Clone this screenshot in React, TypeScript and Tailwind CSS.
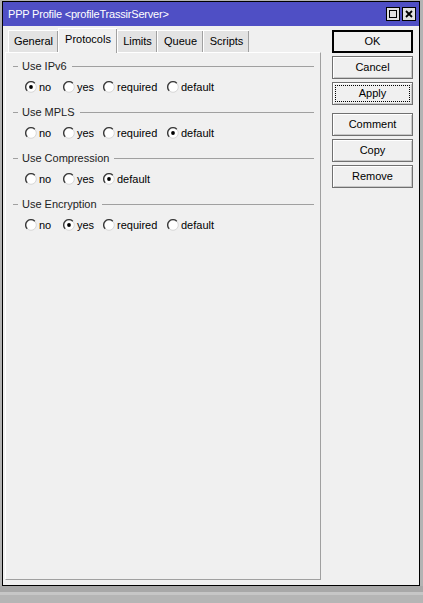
import React from "react";

type Opt = { label: string; w?: string };

const groups: { title: string; options: Opt[]; checked: number }[] = [
  {
    title: "Use IPv6",
    options: [
      { label: "no", w: "w-[38px]" },
      { label: "yes", w: "w-[40px]" },
      { label: "required", w: "w-[64px]" },
      { label: "default" },
    ],
    checked: 0,
  },
  {
    title: "Use MPLS",
    options: [
      { label: "no", w: "w-[38px]" },
      { label: "yes", w: "w-[40px]" },
      { label: "required", w: "w-[64px]" },
      { label: "default" },
    ],
    checked: 3,
  },
  {
    title: "Use Compression",
    options: [
      { label: "no", w: "w-[38px]" },
      { label: "yes", w: "w-[40px]" },
      { label: "default" },
    ],
    checked: 2,
  },
  {
    title: "Use Encryption",
    options: [
      { label: "no", w: "w-[38px]" },
      { label: "yes", w: "w-[40px]" },
      { label: "required", w: "w-[64px]" },
      { label: "default" },
    ],
    checked: 1,
  },
];

const tabs = ["General", "Protocols", "Limits", "Queue", "Scripts"];
const tabWidths = ["w-[50px]", "w-[59px]", "w-[40px]", "w-[46px]", "w-[46px]"];

const Radio = ({ on }: { on: boolean }) => (
  <svg width="12" height="12" viewBox="0 0 12 12" className="shrink-0">
    <circle cx="6" cy="6" r="5.3" fill="#ffffff" stroke="#d6d6d6" strokeWidth="1" />
    <path d="M2.2 9.8 A5.3 5.3 0 0 1 9.8 2.2" stroke="#3c3c3c" strokeWidth="1.4" fill="none" />
    {on && <circle cx="6" cy="6" r="1.9" fill="#000" />}
  </svg>
);

const Btn = ({ label, kind }: { label: string; kind?: "default" | "focus" }) => (
  <div
    className={
      "h-[23px] w-[81px] flex items-center justify-center bg-[#f0f0f0] text-[11px] text-black " +
      (kind === "default"
        ? "border-2 border-black"
        : "border border-[#707070] shadow-[inset_1px_1px_0_#ffffff,inset_-1px_-1px_0_#c8c8c8]")
    }
  >
    {kind === "focus" ? (
      <div className="h-[17px] w-[75px] border border-dotted border-black flex items-center justify-center">
        {label}
      </div>
    ) : (
      label
    )}
  </div>
);

export default function App() {
  return (
    <div
      className="w-[423px] h-[603px] bg-[#b3b3b3] overflow-hidden flex flex-col"
      style={{ fontFamily: '"Liberation Sans", Arial, sans-serif' }}
    >
      <div className="ml-[2px] mt-[1px] w-[418px] h-[585px] border border-black bg-[#f0f0f0] flex flex-col">
        {/* title bar */}
        <div className="h-[24px] bg-[#4f4fc5] flex items-center pl-[5px] pr-[3px] text-white text-[11px] tracking-[-0.2px]">
          <span className="flex-1">PPP Profile &lt;profileTrassirServer&gt;</span>
          <div className="flex gap-[2px]">
            <div className="w-[14px] h-[14px] bg-[#e0e0e0] border border-black flex items-center justify-center">
              <div className="w-[8px] h-[8px] border-[1.5px] border-black" />
            </div>
            <div className="w-[14px] h-[14px] bg-[#e0e0e0] border border-black flex items-center justify-center">
              <svg width="8" height="8" viewBox="0 0 8 8">
                <path d="M1 1 L7 7 M7 1 L1 7" stroke="#000" strokeWidth="1.8" />
              </svg>
            </div>
          </div>
        </div>

        {/* body */}
        <div className="flex flex-1 pl-[2px]">
          <div className="flex flex-col w-[316px]">
            <div className="flex items-end h-[26px] pl-[3px]">
              {tabs.map((t, i) => (
                <div
                  key={t}
                  className={
                    tabWidths[i] +
                    " flex items-center justify-center text-[11px] text-black border-t border-l border-white shadow-[inset_-1px_0_0_#a0a0a0] " +
                    (i === 1 ? "h-[25px] bg-[#f0f0f0] pb-[3px] relative z-10 -mb-[1px]" : "h-[22px] bg-[#e3e3e3]")
                  }
                >
                  {t}
                </div>
              ))}
            </div>
            <div className="flex-1 border-t border-l border-white border-r border-b border-r-[#a0a0a0] border-b-[#a0a0a0] mb-[5px] pt-[3px]">
              {groups.map((g) => (
                <div key={g.title} className="h-[46px]">
                  <div className="h-[20px] flex items-center pl-[7px] pr-[6px] text-[11px] text-[#222]">
                    <div className="w-[5px] h-[1px] bg-[#a0a0a0]" />
                    <span className="ml-[4px] mr-[5px]">{g.title}</span>
                    <div className="flex-1 h-[1px] bg-[#a0a0a0]" />
                  </div>
                  <div className="h-[22px] flex items-center pl-[19px] text-[11px] text-black">
                    {g.options.map((o, i) => (
                      <div key={o.label} className={"flex items-center " + (o.w ?? "")}>
                        <Radio on={i === g.checked} />
                        <span className="ml-[2px]">{o.label}</span>
                      </div>
                    ))}
                  </div>
                </div>
              ))}
            </div>
          </div>

          <div className="flex flex-col ml-[11px] pt-[4px]">
            <Btn label="OK" kind="default" />
            <div className="h-[3px]" />
            <Btn label="Cancel" />
            <div className="h-[3px]" />
            <Btn label="Apply" kind="focus" />
            <div className="h-[8px]" />
            <Btn label="Comment" />
            <div className="h-[3px]" />
            <Btn label="Copy" />
            <div className="h-[3px]" />
            <Btn label="Remove" />
          </div>
        </div>
      </div>
      <div className="h-[6px] bg-[#a8a8a8]" />
      <div className="h-[3px] bg-[#c6c6c6]" />
      <div className="flex-1 bg-[#b5b5b5]" />
    </div>
  );
}
